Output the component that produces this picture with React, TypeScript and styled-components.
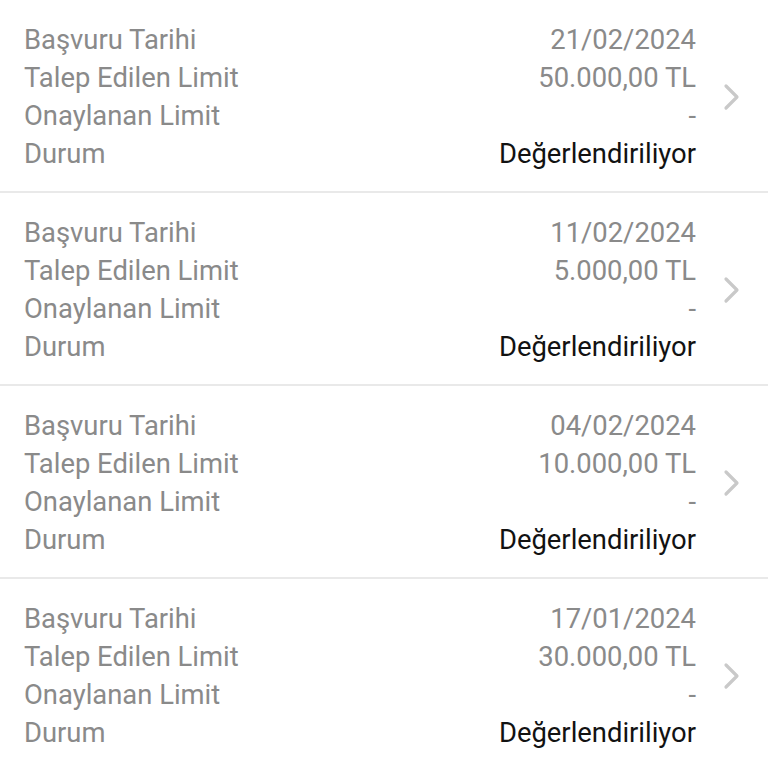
import React from "react";
import styled, { createGlobalStyle } from "styled-components";

const Global = createGlobalStyle`
  html, body { margin: 0; padding: 0; background: #ffffff; }
  body { font-family: Roboto, "Noto Sans", Arial, sans-serif; }
`;

const List = styled.div`
  display: flex;
  flex-direction: column;
  width: 768px;
`;

const Row = styled.div`
  display: flex;
  align-items: center;
  padding: 21px 26px 18px 24px;
  border-bottom: 2px solid #e9e9e9;
`;

const Grid = styled.div`
  flex: 1;
  display: grid;
  grid-template-columns: 1fr auto;
`;

const Label = styled.div`
  font-size: 27.4px;
  line-height: 38px;
  color: #8a8a8a;
`;

const Value = styled.div<{ $strong?: boolean }>`
  font-size: 27.4px;
  line-height: 38px;
  text-align: right;
  color: ${(p) => (p.$strong ? "#121212" : "#8a8a8a")};
`;

const Chevron = styled.svg`
  width: 20px;
  height: 28px;
  margin-left: 26px;
  flex-shrink: 0;
`;

const items = [
  { date: "21/02/2024", req: "50.000,00 TL" },
  { date: "11/02/2024", req: "5.000,00 TL" },
  { date: "04/02/2024", req: "10.000,00 TL" },
  { date: "17/01/2024", req: "30.000,00 TL" },
];

export default function App() {
  return (
    <>
      <Global />
      <List>
        {items.map((it) => (
          <Row key={it.date}>
            <Grid>
              <Label>Başvuru Tarihi</Label>
              <Value>{it.date}</Value>
              <Label>Talep Edilen Limit</Label>
              <Value>{it.req}</Value>
              <Label>Onaylanan Limit</Label>
              <Value>-</Value>
              <Label>Durum</Label>
              <Value $strong>Değerlendiriliyor</Value>
            </Grid>
            <Chevron viewBox="0 0 20 28">
              <path d="M4 3 L15 14 L4 25" fill="none" stroke="#c9c9c9" strokeWidth="3.2" strokeLinecap="round" strokeLinejoin="round" />
            </Chevron>
          </Row>
        ))}
      </List>
    </>
  );
}
